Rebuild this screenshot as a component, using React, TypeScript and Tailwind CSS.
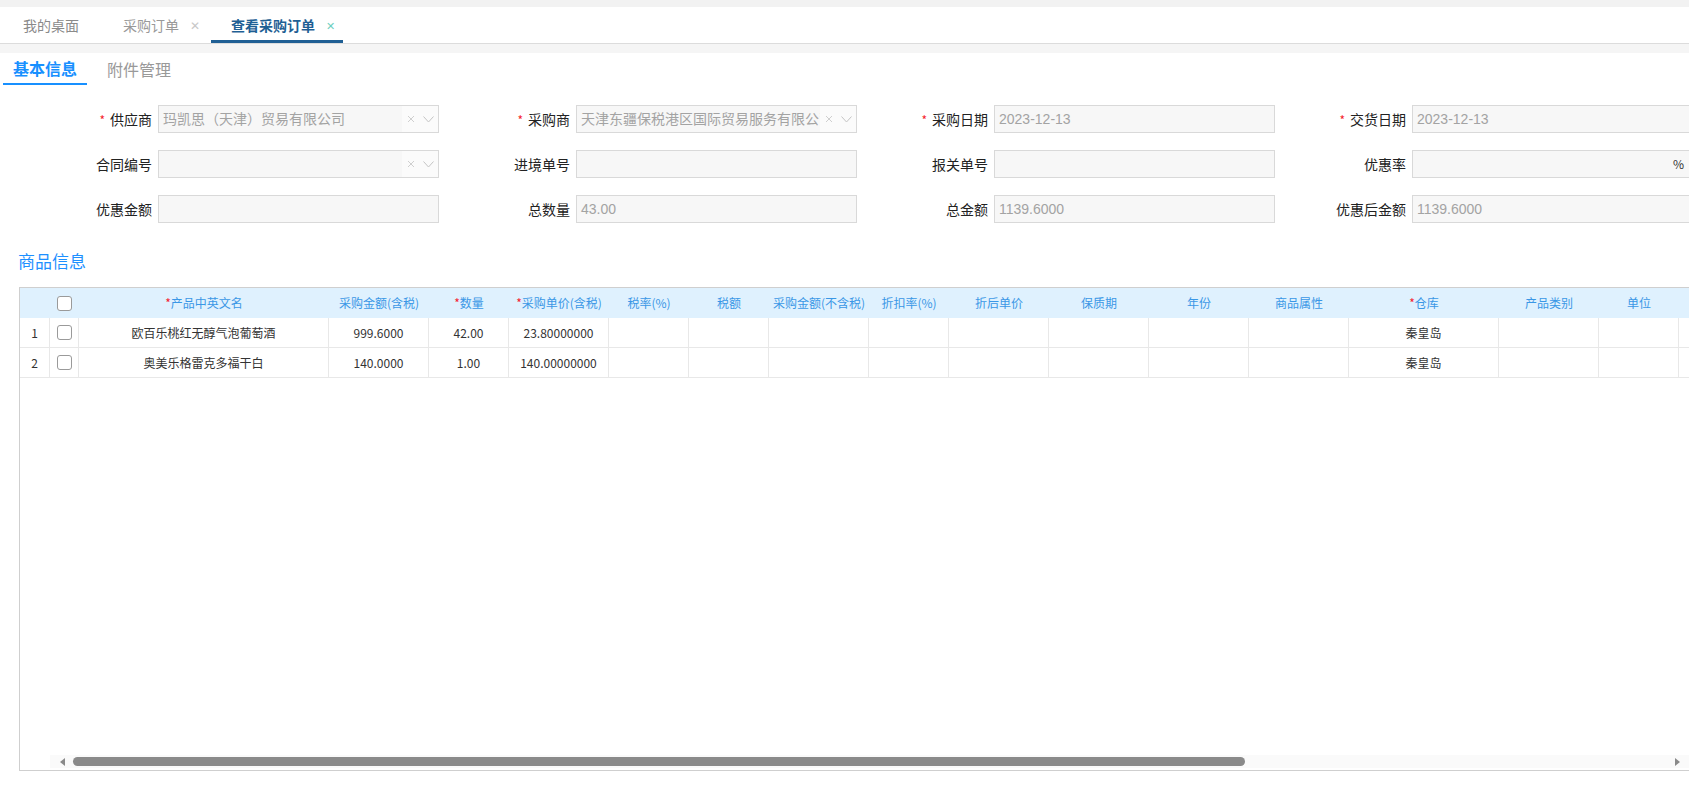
const font = "font-['Noto_Sans_CJK_SC','Noto_Sans',sans-serif]";

type Col = { title: string; w: string; req?: boolean };

const columns: Col[] = [
  { title: "产品中英文名", w: "w-[250px]", req: true },
  { title: "采购金额(含税)", w: "w-[100px]" },
  { title: "数量", w: "w-[80px]", req: true },
  { title: "采购单价(含税)", w: "w-[100px]", req: true },
  { title: "税率(%)", w: "w-[80px]" },
  { title: "税额", w: "w-[80px]" },
  { title: "采购金额(不含税)", w: "w-[100px]" },
  { title: "折扣率(%)", w: "w-[80px]" },
  { title: "折后单价", w: "w-[100px]" },
  { title: "保质期", w: "w-[100px]" },
  { title: "年份", w: "w-[100px]" },
  { title: "商品属性", w: "w-[100px]" },
  { title: "仓库", w: "w-[150px]", req: true },
  { title: "产品类别", w: "w-[100px]" },
  { title: "单位", w: "w-[80px]" },
  { title: "", w: "w-[100px]" },
];

const rows = [
  ["欧百乐桃红无醇气泡葡萄酒", "999.6000", "42.00", "23.80000000", "", "", "", "", "", "", "", "", "秦皇岛", "", "", ""],
  ["奥美乐格雷克多福干白", "140.0000", "1.00", "140.00000000", "", "", "", "", "", "", "", "", "秦皇岛", "", "", ""],
];

type Field = { label: string; req?: boolean; value?: string; kind?: "select" | "percent" };

const fields: Field[] = [
  { label: "供应商", req: true, value: "玛凯思（天津）贸易有限公司", kind: "select" },
  { label: "采购商", req: true, value: "天津东疆保税港区国际贸易服务有限公司", kind: "select" },
  { label: "采购日期", req: true, value: "2023-12-13" },
  { label: "交货日期", req: true, value: "2023-12-13" },
  { label: "合同编号", kind: "select" },
  { label: "进境单号" },
  { label: "报关单号" },
  { label: "优惠率", kind: "percent" },
  { label: "优惠金额" },
  { label: "总数量", value: "43.00" },
  { label: "总金额", value: "1139.6000" },
  { label: "优惠后金额", value: "1139.6000" },
];

function Checkbox() {
  return <span className="block w-[15px] h-[15px] border border-[#9a9a9a] rounded-[3px] bg-white" />;
}

function FormField({ f }: { f: Field }) {
  return (
    <div className="flex items-center w-[418px]">
      <label className="w-[132px] text-right text-[14px] text-[#222] pr-[1px]">
        {f.req && <span className="text-[#f5222d] text-[12px] mr-[5px]">*</span>}
        {f.label}
      </label>
      <div className="ml-[5px] w-[281px] h-[28px] shrink-0 border border-[#d9d9d9] bg-[#f7f7f7] flex items-center">
        <span className="flex-1 pl-[4px] text-[14px] text-[#a3a3a3] whitespace-nowrap overflow-hidden font-['Liberation_Sans','Noto_Sans_CJK_SC',sans-serif]">
          {f.value ?? ""}
        </span>
        {f.kind === "select" && (
          <span className="h-full w-[36px] shrink-0 bg-[#fbfbfb] flex items-center gap-[8px] pl-[5px] text-[#c8c8c8]">
            <svg width="8" height="8" viewBox="0 0 8 8">
              <path d="M1 1L7 7M7 1L1 7" stroke="#cfcfcf" strokeWidth="1" />
            </svg>
            <svg width="11" height="7" viewBox="0 0 11 7">
              <path d="M0.5 0.5L5.5 6L10.5 0.5" stroke="#c4c4c4" strokeWidth="1" fill="none" />
            </svg>
          </span>
        )}
        {f.kind === "percent" && <span className="pr-[8px] text-[12px] text-[#333]">%</span>}
      </div>
    </div>
  );
}

export default function App() {
  return (
    <div className={`w-[1689px] h-[796px] overflow-hidden bg-white ${font}`}>
      <div className="h-[7px] bg-[#f2f2f2]" />
      <div className="h-[37px] bg-white border-b border-[#dcdcdc] flex text-[14px]">
        <div className="w-[101px] pl-[23px] flex items-center text-[#8a8a8a]">我的桌面</div>
        <div className="w-[110px] pl-[22px] flex items-center text-[#999]">
          采购订单
          <span className="ml-[11px] text-[12px] text-[#c8c8c8]">✕</span>
        </div>
        <div className="w-[132px] pl-[20px] flex items-center border-b-[3px] border-[#1f5f94] pt-[3px] font-bold text-[#1f5f94]">
          查看采购订单
          <span className="ml-[11px] text-[11px] font-normal text-[#6ecfbf]">✕</span>
        </div>
      </div>
      <div className="h-[9px] bg-[#f5f5f5]" />

      <div className="h-[32px] flex px-[3px]">
        <div className="w-[84px] h-full flex items-center justify-center border-b-2 border-[#1890ff] text-[16px] font-semibold text-[#1890ff]">
          基本信息
        </div>
        <div className="ml-[20px] h-full flex items-center text-[16px] text-[#999]">附件管理</div>
      </div>

      <div className="mt-[20px] ml-[21px] grid grid-cols-[418px_418px_418px_418px] gap-y-[17px]">
        {fields.map((f) => (
          <FormField key={f.label} f={f} />
        ))}
      </div>

      <div className="mt-[27px] ml-[18px] h-[22px] flex items-center text-[17px] text-[#1e90ff]">商品信息</div>

      <div className="mt-[15px] ml-[19px] h-[484px] border border-r-0 border-[#cfcfcf] flex flex-col overflow-hidden text-[12px]">
        <div className="h-[30px] shrink-0 flex bg-[#dff1fe] text-[#3a97e6]">
          <div className="w-[30px] shrink-0" />
          <div className="w-[29px] shrink-0 flex items-center justify-center">
            <Checkbox />
          </div>
          {columns.map((c, i) => (
            <div key={i} className={`${c.w} shrink-0 flex items-center justify-center whitespace-nowrap`}>
              {c.req && <span className="text-[#f5222d]">*</span>}
              {c.title}
            </div>
          ))}
        </div>
        {rows.map((r, ri) => (
          <div key={ri} className="h-[30px] shrink-0 flex border-b border-[#e8e8e8] text-[#333]">
            <div className="w-[30px] shrink-0 border-r border-[#e8e8e8] flex items-center justify-center">{ri + 1}</div>
            <div className="w-[29px] shrink-0 border-r border-[#e8e8e8] flex items-center justify-center">
              <Checkbox />
            </div>
            {columns.map((c, i) => (
              <div
                key={i}
                className={`${c.w} shrink-0 border-r border-[#e8e8e8] flex items-center justify-center whitespace-nowrap`}
              >
                {r[i]}
              </div>
            ))}
          </div>
        ))}
        <div className="flex-1" />
        <div className="h-[13px] mb-[2px] ml-[30px] bg-[#fafafa] flex items-center">
          <svg width="12" height="10" viewBox="0 0 12 10" className="ml-[7px]">
            <path d="M8 1L3 5L8 9Z" fill="#8a8a8a" />
          </svg>
          <div className="ml-[4px] w-[1172px] h-[9px] rounded-full bg-[#8a8a8a]" />
          <div className="flex-1" />
          <svg width="12" height="10" viewBox="0 0 12 10" className="mr-[5px]">
            <path d="M3 1L8 5L3 9Z" fill="#8a8a8a" />
          </svg>
        </div>
      </div>
    </div>
  );
}
